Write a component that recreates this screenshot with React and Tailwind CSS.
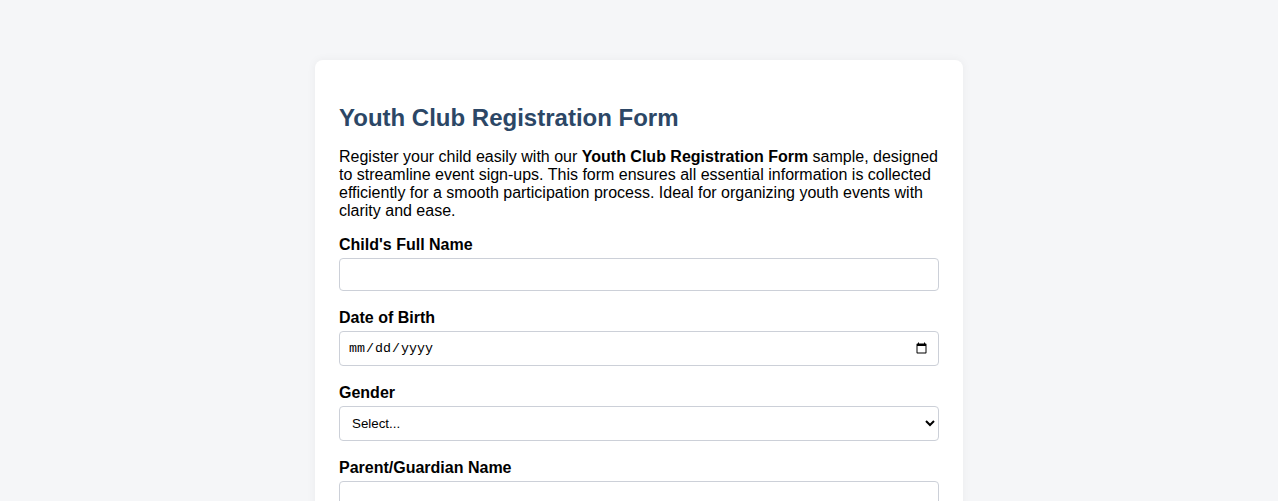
import React, { useState } from "react";

const fieldClass =
  "block w-full rounded-[4px] border border-[#ccd0d8] bg-white px-2 text-[13.33px] text-black focus:outline-none";

const labelClass = "mb-[4px] block text-[16px] leading-[18px] font-bold text-black";

const App = () => {
  const [form, setForm] = useState({
    childName: "",
    dob: "",
    gender: "",
    parentName: "",
  });

  const update = (field) => (e) => setForm({ ...form, [field]: e.target.value });

  return (
    <div
      className="min-h-screen bg-[#f5f6f8] pt-[60px] pb-10"
      style={{ fontFamily: '"Liberation Sans", Arial, sans-serif' }}
    >
      <div className="mx-auto w-[648px] rounded-lg bg-white px-6 pt-[44px] pb-6 shadow-[0_0_10px_rgba(0,0,0,0.05)]">
        <h1 className="text-[24px] leading-[28px] font-bold text-[#2c4766]">
          Youth Club Registration Form
        </h1>
        <p className="mt-[16px] text-[16px] leading-[18px] text-black">
          Register your child easily with our{" "}
          <strong className="font-bold">Youth Club Registration Form</strong>{" "}
          sample, designed to streamline event sign-ups. This form ensures all
          essential information is collected efficiently for a smooth
          participation process. Ideal for organizing youth events with clarity
          and ease.
        </p>

        <form className="mt-[16px]" onSubmit={(e) => e.preventDefault()}>
          <div className="mb-[18px]">
            <label className={labelClass}>Child's Full Name</label>
            <input
              type="text"
              value={form.childName}
              onChange={update("childName")}
              className={`${fieldClass} h-[33px]`}
            />
          </div>

          <div className="mb-[18px]">
            <label className={labelClass}>Date of Birth</label>
            <input
              type="date"
              value={form.dob}
              onChange={update("dob")}
              className={`${fieldClass} h-[35px]`}
              style={{ fontFamily: '"Liberation Mono", monospace' }}
            />
          </div>

          <div className="mb-[18px]">
            <label className={labelClass}>Gender</label>
            <select
              value={form.gender}
              onChange={update("gender")}
              className={`${fieldClass} h-[35px]`}
            >
              <option value="">Select...</option>
              <option value="male">Male</option>
              <option value="female">Female</option>
              <option value="other">Other</option>
            </select>
          </div>

          <div className="mb-[18px]">
            <label className={labelClass}>Parent/Guardian Name</label>
            <input
              type="text"
              value={form.parentName}
              onChange={update("parentName")}
              className={`${fieldClass} h-[33px]`}
            />
          </div>
        </form>
      </div>
    </div>
  );
};

export default App;
